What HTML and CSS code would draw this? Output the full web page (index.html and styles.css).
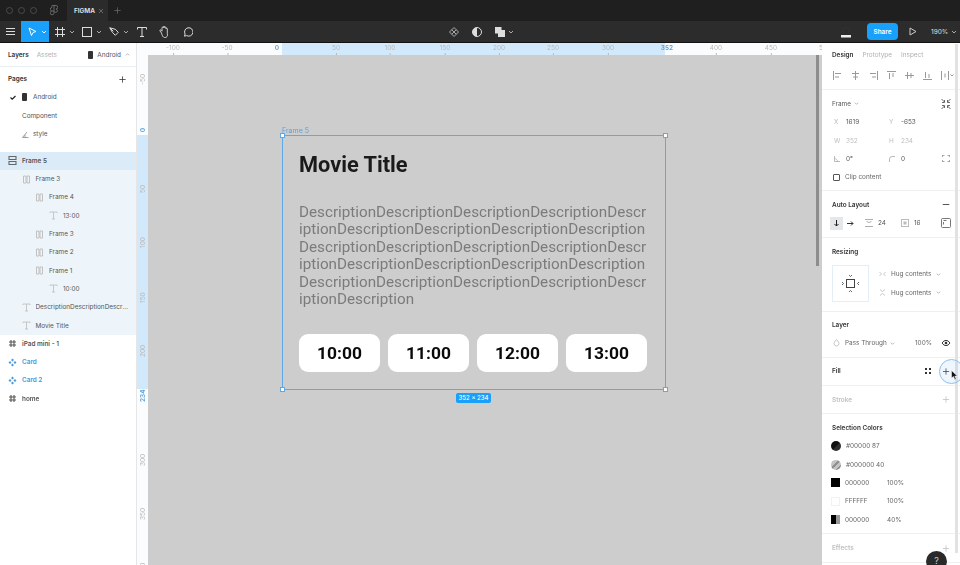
FILE: index.html
```html
<!DOCTYPE html>
<html lang="en">

<head>
  <meta charset="UTF-8">
  <title>Figma</title>
  <link rel="stylesheet" href="styles.css">
</head>

<body>

<svg class="sprite" width="0" height="0">
  <symbol id="chev" viewBox="0 0 6 6"><path d="M1 2l2 2 2-2" fill="none" stroke="currentColor"/></symbol>
  <symbol id="al" viewBox="0 0 9 9"><path d="M1.500 1h2.500v7H1.500zM5 1h2.500v7H5z" fill="none" stroke="currentColor" stroke-width=".9"/></symbol>
  <symbol id="alv" viewBox="0 0 9 9"><path d="M1 .5h7v3H1zM1 5.500h7v3H1z" fill="none" stroke="currentColor" stroke-width="1.100"/></symbol>
  <symbol id="txt" viewBox="0 0 9 9"><path d="M1 2V1h7v1M4.500 1v7M3 8h3" fill="none" stroke="currentColor" stroke-width=".8"/></symbol>
  <symbol id="hash" viewBox="0 0 9 9"><path d="M3 1v7M6 1v7M1 3h7M1 6h7" fill="none" stroke="currentColor" stroke-width="1.100"/></symbol>
  <symbol id="comp" viewBox="0 0 9 9"><path d="M4.500 .5l1.500 1.500-1.500 1.500L3 2zM4.500 5.500L6 7 4.500 8.500 3 7zM2 3l1.500 1.500L2 6 .5 4.500zM7 3l1.500 1.500L7 6 5.500 4.500z" fill="currentColor"/></symbol>
  <symbol id="plus" viewBox="0 0 9 9"><path d="M4.500 .5v8M.5 4.500h8" fill="none" stroke="currentColor"/></symbol>
</svg>

<div class="app">

  <div class="tabbar">
    <div class="lights"><i></i><i></i><i></i></div>
    <svg class="fig-logo" width="8" height="12" viewBox="0 0 8 12"><path d="M2 .5h4a1.700 1.700 0 0 1 0 3.500 1.700 1.700 0 1 1-2 2H2a1.700 1.700 0 0 1 0-3.500A1.700 1.700 0 0 1 2 .5zM4 .5v7.500a1.900 1.900 0 1 1-2-2" fill="none" stroke="#666"/></svg>
    <div class="file-tab">
      <span>FIGMA</span>
      <svg width="6" height="6" viewBox="0 0 6 6"><path d="M1 1l4 4M5 1L1 5" stroke="#666"/></svg>
    </div>
    <svg class="new-tab" width="7" height="7"><use href="#plus"/></svg>
  </div>

  <div class="toolbar">
    <div class="tools">
      <div class="tool t-menu"><svg width="10" height="8" viewBox="0 0 10 8"><path d="M0 .5h9M0 3.500h9M0 6.500h9" stroke="#ddd"/></svg></div>
      <div class="tool t-move">
        <svg width="9" height="10" viewBox="0 0 9 10"><path d="M1 1l7 3.500-3 1-1.500 3z" fill="none" stroke="#fff"/></svg>
        <svg class="chev" width="6" height="6"><use href="#chev"/></svg>
      </div>
      <div class="tool t-wide">
        <svg width="10" height="10" viewBox="0 0 10 10"><path d="M2.500 0v10M7.500 0v10M0 2.500h10M0 7.500h10" stroke="#ddd"/></svg>
        <svg class="chev" width="6" height="6"><use href="#chev"/></svg>
      </div>
      <div class="tool t-wide">
        <svg width="10" height="10" viewBox="0 0 10 10"><rect x=".5" y=".5" width="9" height="9" fill="none" stroke="#ddd"/></svg>
        <svg class="chev" width="6" height="6"><use href="#chev"/></svg>
      </div>
      <div class="tool t-wide">
        <svg width="10" height="10" viewBox="0 0 10 10"><path d="M.8.800l5.500 1.500 3 3-3 3-3-3zM.8.800l3.500 3.500" fill="none" stroke="#ddd"/></svg>
        <svg class="chev" width="6" height="6"><use href="#chev"/></svg>
      </div>
      <div class="tool t-single"><svg width="10" height="10" viewBox="0 0 10 10"><path d="M.5 2.500V.5h9v2M5 .5v9M3 9.500h4" fill="none" stroke="#ddd"/></svg></div>
      <div class="tool t-single"><svg width="11" height="12" viewBox="0 0 11 12"><path d="M2.500 7L1 5c-.6-1 .6-1.500 1.200-.7L3 5.200V1.800c0-1 1.300-1 1.300 0V1c0-1 1.400-1 1.400 0v.8c0-1 1.300-1 1.300 0v1c0-1 1.300-1 1.300 0v4.700C9 10 7.800 11.500 6 11.500S3.500 10.500 2.500 7z" fill="none" stroke="#ddd" stroke-width=".9"/></svg></div>
      <div class="tool t-single"><svg width="10" height="10" viewBox="0 0 10 10"><path d="M1.500 9.200l.6-2.200A4.200 4.200 0 1 1 3.700 8.600z" fill="none" stroke="#ddd"/></svg></div>
    </div>

    <div class="tools-center">
      <svg width="10" height="10" viewBox="0 0 10 10"><path d="M5 .5L9.500 5 5 9.500.5 5zM2.700 2.700l4.600 4.600M7.300 2.700L2.700 7.300" fill="none" stroke="#aaa"/></svg>
      <svg width="10" height="10" viewBox="0 0 10 10"><circle cx="5" cy="5" r="4.500" fill="none" stroke="#ddd"/><path d="M5 .5a4.500 4.500 0 0 0 0 9z" fill="#ddd"/></svg>
      <div class="bool">
        <svg width="10" height="10" viewBox="0 0 10 10"><path d="M0 0h6.500v3H10v7H3V6.500H0z" fill="#ddd"/></svg>
        <svg class="chev" width="6" height="6"><use href="#chev"/></svg>
      </div>
    </div>

    <div class="tools-right">
      <svg class="user" width="12" height="12" viewBox="0 0 12 12"><path d="M1 9h10v2.500H1z" fill="#eee"/><path d="M3 7V3l3-2 3 2v4" fill="none" stroke="#333"/></svg>
      <div class="share">Share</div>
      <svg class="play" width="8" height="9" viewBox="0 0 8 9"><path d="M1 1l6 3.500L1 8z" fill="none" stroke="#ccc"/></svg>
      <span class="zoom">190%</span>
      <svg class="chev" width="6" height="6"><use href="#chev"/></svg>
    </div>
  </div>

  <div class="workspace">

    <div class="left-panel">
      <div class="panel-tabs">
        <b>Layers</b>
        <span class="muted">Assets</span>
        <span class="page-pick">
          <svg width="5" height="8" viewBox="0 0 5 8"><rect width="5" height="8" rx="1" fill="#333"/></svg>
          Android
          <svg class="chev-up" width="5" height="5"><use href="#chev"/></svg>
        </span>
      </div>

      <div class="pages">
        <div class="pages-head">
          <b>Pages</b>
          <svg width="7" height="7"><use href="#plus"/></svg>
        </div>
        <div class="page-row">
          <svg class="check" width="6" height="5" viewBox="0 0 6 5"><path d="M.5 2.500l1.700 1.700L5.500 1" fill="none" stroke="#222" stroke-width="1.200"/></svg>
          <svg width="5" height="8" viewBox="0 0 5 8"><rect width="5" height="8" rx="1" fill="#333"/></svg>
          <span>Android</span>
        </div>
        <div class="page-row page-plain"><span>Component</span></div>
        <div class="page-row page-plain">
          <svg width="7" height="7" viewBox="0 0 7 7"><path d="M.5 6.500h6M.5 6.500L5 1M3 6.500V4" fill="none" stroke="#888" stroke-width=".8"/></svg>
          <span>style</span>
        </div>
      </div>

      <div class="layers">
        <div class="layer d0 sel"><svg width="9" height="9"><use href="#alv"/></svg><b>Frame 5</b></div>
        <div class="layer d1 child"><svg width="9" height="9"><use href="#al"/></svg><span>Frame 3</span></div>
        <div class="layer d2 child"><svg width="9" height="9"><use href="#al"/></svg><span>Frame 4</span></div>
        <div class="layer d3 child"><svg width="9" height="9"><use href="#txt"/></svg><span>13:00</span></div>
        <div class="layer d2 child"><svg width="9" height="9"><use href="#al"/></svg><span>Frame 3</span></div>
        <div class="layer d2 child"><svg width="9" height="9"><use href="#al"/></svg><span>Frame 2</span></div>
        <div class="layer d2 child"><svg width="9" height="9"><use href="#al"/></svg><span>Frame 1</span></div>
        <div class="layer d3 child"><svg width="9" height="9"><use href="#txt"/></svg><span>10:00</span></div>
        <div class="layer d1 child"><svg width="9" height="9"><use href="#txt"/></svg><span class="clip">DescriptionDescriptionDescription</span></div>
        <div class="layer d1 child"><svg width="9" height="9"><use href="#txt"/></svg><span>Movie Title</span></div>
        <div class="layer d0"><svg class="ic-dark" width="9" height="9"><use href="#hash"/></svg><b>iPad mini - 1</b></div>
        <div class="layer d0 purple"><svg width="9" height="9"><use href="#comp"/></svg><b>Card</b></div>
        <div class="layer d0 purple"><svg width="9" height="9"><use href="#comp"/></svg><b>Card 2</b></div>
        <div class="layer d0"><svg class="ic-dark" width="9" height="9"><use href="#hash"/></svg><b>home</b></div>
      </div>
    </div>

    <div class="stage">
      <div class="corner"></div>

      <div class="ruler-h">
        <div class="range"></div>
        <span class="rt" style="left:25px">-100</span>
        <span class="rt" style="left:79px">-50</span>
        <span class="rt rt-on" style="left:129px">0</span>
        <span class="rt" style="left:188px">50</span>
        <span class="rt" style="left:242px">100</span>
        <span class="rt" style="left:297px">150</span>
        <span class="rt" style="left:351px">200</span>
        <span class="rt" style="left:405px">250</span>
        <span class="rt" style="left:460px">300</span>
        <span class="rt rt-on" style="left:519px">352</span>
        <span class="rt" style="left:568px">400</span>
        <span class="rt" style="left:623px">450</span>
        <span class="rt" style="left:677px">500</span>
      </div>

      <div class="ruler-v">
        <div class="range"></div>
        <span class="rv" style="top:25px">-50</span>
        <span class="rv rt-on" style="top:75px">0</span>
        <span class="rv" style="top:134px">50</span>
        <span class="rv" style="top:188px">100</span>
        <span class="rv" style="top:243px">150</span>
        <span class="rv" style="top:297px">200</span>
        <span class="rv rt-on" style="top:342px">234</span>
        <span class="rv" style="top:406px">300</span>
        <span class="rv" style="top:460px">350</span>
        <span class="rv" style="top:515px">400</span>
      </div>

      <div class="canvas">
        <div class="frame">
          <span class="frame-name">Frame 5</span>
          <h1 class="movie-title">Movie Title</h1>
          <p class="desc">DescriptionDescriptionDescriptionDescriptionDescriptionDescriptionDescriptionDescriptionDescriptionDescriptionDescriptionDescriptionDescriptionDescriptionDescriptionDescriptionDescriptionDescriptionDescriptionDescriptionDescriptionDescriptionDescriptionDescription</p>
          <div class="times">
            <div class="time">10:00</div>
            <div class="time">11:00</div>
            <div class="time">12:00</div>
            <div class="time">13:00</div>
          </div>
          <i class="handle h-tl"></i><i class="handle h-tr"></i><i class="handle h-bl"></i><i class="handle h-br"></i>
          <span class="dims">352 × 234</span>
        </div>
        <div class="canvas-scroll"></div>
      </div>
    </div>

    <div class="right-panel">
      <div class="panel-scroll"></div>

      <div class="section top-section">
        <div class="design-tabs">
          <b>Design</b>
          <span class="muted">Prototype</span>
          <span class="muted">Inspect</span>
        </div>
        <div class="align-row">
          <svg width="9" height="9" viewBox="0 0 9 9"><path d="M.5 0v9M2 2.500h6M2 6h4" stroke="#999"/></svg>
          <svg width="9" height="9" viewBox="0 0 9 9"><path d="M4.500 0v9M1 2.500h7M2 6h5" stroke="#999"/></svg>
          <svg width="9" height="9" viewBox="0 0 9 9"><path d="M8.500 0v9M1 2.500h6M3 6h4" stroke="#999"/></svg>
          <svg width="9" height="9" viewBox="0 0 9 9"><path d="M0 .5h9M2.500 2v6M6 2v4" stroke="#999"/></svg>
          <svg width="9" height="9" viewBox="0 0 9 9"><path d="M0 4.500h9M2.500 1v7M6 2v5" stroke="#999"/></svg>
          <svg width="9" height="9" viewBox="0 0 9 9"><path d="M0 8.500h9M2.500 1v6M6 3v4" stroke="#999"/></svg>
          <svg width="13" height="9" viewBox="0 0 13 9"><path d="M.5 0v9M7.500 0v9M4 2.500v4M9.500 3.500l1.500 1.500 1.500-1.500" fill="none" stroke="#999"/></svg>
        </div>
      </div>

      <div class="section frame-sec">
        <div class="row">
          <span class="sec-plain">Frame</span>
          <svg class="chev-g" width="5" height="5"><use href="#chev"/></svg>
          <svg class="row-end" width="10" height="10" viewBox="0 0 10 10"><path d="M.5 0l3 3M9.500 0l-3 3M.5 10l3-3M9.500 10l-3-3M3.500 1v2.500H1M6.500 1v2.500H9M3.500 9V6.500H1M6.500 9V6.500H9" fill="none" stroke="#444" stroke-width=".8"/></svg>
        </div>
        <div class="row"><div class="field"><em>X</em><span>1619</span></div><div class="field"><em>Y</em><span>-653</span></div></div>
        <div class="row"><div class="field off"><em>W</em><span>352</span></div><div class="field off"><em>H</em><span>234</span></div></div>
        <div class="row">
          <div class="field"><svg class="f-ic" width="6" height="6" viewBox="0 0 6 6"><path d="M.5 0v5.500H6M.5 2.500c1.500 0 3 1.500 3 3" fill="none" stroke="#aaa" stroke-width=".8"/></svg><span>0°</span></div>
          <div class="field"><svg class="f-ic" width="6" height="6" viewBox="0 0 6 6"><path d="M.5 6V3A2.500 2.500 0 0 1 3 .5h3" fill="none" stroke="#aaa" stroke-width=".8"/></svg><span>0</span></div>
          <svg class="row-end" width="7" height="7" viewBox="0 0 7 7"><path d="M0 2V0h2M5 0h2v2M7 5v2H5M2 7H0V5" fill="none" stroke="#555"/></svg>
        </div>
        <div class="row clip-row"><i class="checkbox"></i><span>Clip content</span></div>
      </div>

      <div class="section">
        <div class="row">
          <b>Auto Layout</b>
          <svg class="row-end" width="7" height="2"><path d="M0 .5h7" stroke="#555"/></svg>
        </div>
        <div class="row al-row">
          <span class="dir-on"><svg width="7" height="7" viewBox="0 0 7 7"><path d="M3.500 0v6M1.500 4l2 2 2-2" fill="none" stroke="#222"/></svg></span>
          <svg class="dir" width="7" height="7" viewBox="0 0 7 7"><path d="M0 3.500h6M4 1.500l2 2-2 2" fill="none" stroke="#333"/></svg>
          <svg class="al-gap" width="8" height="8" viewBox="0 0 8 8"><path d="M0 .5h8M0 7.500h8M1.500 2.500l2.500 1 2.500-1" fill="none" stroke="#999" stroke-width=".8"/></svg>
          <span class="al-num">24</span>
          <svg class="al-pad" width="8" height="8" viewBox="0 0 8 8"><rect x=".5" y=".5" width="7" height="7" fill="none" stroke="#bbb"/><rect x="2.500" y="2.500" width="3" height="3" fill="#bbb"/></svg>
          <span class="al-num">16</span>
          <svg class="row-end" width="10" height="10" viewBox="0 0 10 10"><rect x=".5" y=".5" width="9" height="9" rx="1" fill="none" stroke="#777"/><path d="M2.500 2.500h3M2.500 4v2.500" stroke="#777"/></svg>
        </div>
      </div>

      <div class="section resize-sec">
        <div class="row"><b>Resizing</b></div>
        <div class="resize">
          <div class="resize-box">
            <svg width="19" height="19" viewBox="0 0 19 19"><rect x="5.500" y="5.500" width="8" height="8" fill="none" stroke="#444"/><path d="M8 1l1.500 1.500L11 1M8 18l1.500-1.500L11 18M1 8l1.500 1.500L1 11M18 8l-1.500 1.500L18 11" fill="none" stroke="#444" stroke-width=".8"/></svg>
          </div>
          <div class="hug">
            <div class="hug-row">
              <svg width="7" height="6" viewBox="0 0 7 6"><path d="M.5 1l2 2-2 2M6.500 1l-2 2 2 2" fill="none" stroke="#bbb" stroke-width=".8"/></svg>
              <span>Hug contents</span>
              <svg class="chev-g" width="5" height="5"><use href="#chev"/></svg>
            </div>
            <div class="hug-row">
              <svg width="7" height="7" viewBox="0 0 7 7"><path d="M1 .5l2.500 2 2.500-2M1 6.500l2.500-2 2.500 2" fill="none" stroke="#bbb" stroke-width=".8"/></svg>
              <span>Hug contents</span>
              <svg class="chev-g" width="5" height="5"><use href="#chev"/></svg>
            </div>
          </div>
        </div>
      </div>

      <div class="section tight">
        <div class="row"><b>Layer</b></div>
        <div class="row blend-row">
          <svg width="7" height="8" viewBox="0 0 7 8"><path d="M3.500.5l2 2.500a2.500 2.500 0 1 1-4 0z" fill="none" stroke="#bbb" stroke-width=".8"/></svg>
          <span>Pass Through</span>
          <svg class="chev-g" width="5" height="5"><use href="#chev"/></svg>
          <span class="blend-pct">100%</span>
          <svg class="row-end" width="9" height="6" viewBox="0 0 9 6"><path d="M.5 3C2 1 3 .5 4.500.5S7 1 8.500 3C7 5 6 5.500 4.500 5.500S2 5 .5 3z" fill="none" stroke="#333"/><circle cx="4.500" cy="3" r="1.300" fill="#333"/></svg>
        </div>
      </div>

      <div class="section tight">
        <div class="row">
          <b>Fill</b>
          <svg class="fill-grid" width="6" height="6" viewBox="0 0 6 6"><path d="M0 0h2v2H0zM4 0h2v2H4zM0 4h2v2H0zM4 4h2v2H4z" fill="#333"/></svg>
          <svg class="row-end" width="7" height="7"><use href="#plus"/></svg>
        </div>
      </div>

      <div class="section tight">
        <div class="row off-row">
          <b>Stroke</b>
          <svg class="row-end" width="7" height="7"><use href="#plus"/></svg>
        </div>
      </div>

      <div class="section">
        <div class="row"><b>Selection Colors</b></div>
        <div class="row color-row"><i class="sw sw-dark"></i><span>#00000 87</span></div>
        <div class="row color-row"><i class="sw sw-grey"></i><span>#000000 40</span></div>
        <div class="row color-row"><i class="sq sq-black"></i><span class="hex">000000</span><span>100%</span></div>
        <div class="row color-row"><i class="sq sq-white"></i><span class="hex">FFFFFF</span><span>100%</span></div>
        <div class="row color-row"><i class="sq sq-half"></i><span class="hex">000000</span><span>40%</span></div>
      </div>

      <div class="section">
        <div class="row off-row">
          <b>Effects</b>
          <svg class="row-end" width="7" height="7"><use href="#plus"/></svg>
        </div>
      </div>

      <div class="help">?</div>

      <div class="click-ring"></div>
      <svg class="cursor" width="7" height="10" viewBox="0 0 7 10"><path d="M.5.500v7.500l2-1.500 1.300 3 1.300-.6-1.300-2.800h2.500z" fill="#111" stroke="#fff" stroke-width=".5"/></svg>
    </div>

  </div>
</div>

</body>
</html>
```

FILE: styles.css
```css
* {
  margin: 0;
  padding: 0;
  box-sizing: border-box;
}

:root {
  --blue: #18a0fb;
  --sel-line: #5ea9e8;
  --canvas: #cdcdcd;
  --text: #333;
  --muted: #b0b0b0;
  --line: #eef0f2;
  --row-h: 18.3px;
}

body {
  width: 960px;
  height: 565px;
  overflow: hidden;
  background: #fff;
  font-family: 'Inter', sans-serif;
  font-size: 6.4px;
  color: var(--text);
}

.sprite {
  position: absolute;
}

svg {
  display: block;
  flex-shrink: 0;
}

b {
  font-weight: 600;
}

em {
  font-style: normal;
}

.app {
  height: 565px;
  display: flex;
  flex-direction: column;
  filter: blur(0.45px);
}

.muted {
  color: var(--muted);
}

/* title bar */
.tabbar {
  height: 21px;
  background: #1f1f1f;
  display: flex;
  align-items: center;
  color: #666;
}

.lights {
  display: flex;
  gap: 5px;
  margin-left: 6px;
  width: 40px;
}

.lights i {
  width: 7px;
  height: 7px;
  border: 1px solid #4b4b4b;
  border-radius: 50%;
}

.fig-logo {
  margin-left: 4px;
}

.file-tab {
  height: 21px;
  width: 41px;
  margin-left: 9px;
  padding: 0 4px 0 7px;
  background: #2b2b2b;
  display: flex;
  align-items: center;
  justify-content: space-between;
  font-weight: 700;
  color: #ddd;
}

.new-tab {
  margin-left: 6px;
}

/* toolbar */
.toolbar {
  height: 22px;
  background: #2c2c2c;
  border-bottom: 1px solid #111;
  display: flex;
  align-items: center;
  color: #ccc;
}

.tools {
  display: flex;
  height: 21px;
  width: 452px;
}

.tool {
  display: flex;
  align-items: center;
  justify-content: center;
  gap: 4px;
  height: 21px;
}

.chev {
  color: #aaa;
}

.t-menu {
  width: 21px;
}

.t-move {
  width: 28px;
  padding-left: 5px;
  background: var(--blue);
  color: #fff;
}

.t-move .chev {
  color: #fff;
}

.t-wide {
  width: 27px;
  padding-left: 5px;
}

.t-single {
  width: 23px;
}

.tools-center {
  display: flex;
  align-items: center;
  gap: 13px;
  margin-left: -4px;
  width: 392px;
  padding-left: 1px;
}

.bool {
  display: flex;
  align-items: center;
  gap: 3px;
}

.tools-right {
  display: flex;
  align-items: center;
  flex: 1;
}

.share {
  width: 31px;
  height: 17px;
  margin-left: 15px;
  background: var(--blue);
  border-radius: 4px;
  color: #fff;
  font-weight: 600;
  display: flex;
  align-items: center;
  justify-content: center;
}

.play {
  margin-left: 11px;
}

.zoom {
  margin-left: 14px;
  margin-right: 3px;
  font-weight: 500;
}

/* main area */
.workspace {
  flex: 1;
  display: flex;
  min-height: 0;
}

.left-panel {
  width: 136px;
  flex-shrink: 0;
  background: #fff;
}

.panel-tabs {
  height: 24px;
  padding: 0 6px 0 8px;
  border-bottom: 1px solid #e8f0f6;
  display: flex;
  align-items: center;
  gap: 8px;
}

.page-pick {
  margin-left: auto;
  display: flex;
  align-items: center;
  gap: 4px;
  color: #555;
}

.chev-up {
  transform: rotate(180deg);
  color: #aaa;
}

.pages {
  padding: 3px 0 8.500px;
}

.pages-head {
  height: var(--row-h);
  padding: 0 10px 0 8px;
  display: flex;
  align-items: center;
  justify-content: space-between;
}

.page-row {
  height: var(--row-h);
  padding-left: 10px;
  display: flex;
  align-items: center;
  gap: 6px;
}

.page-row span {
  color: #555;
}

.page-plain {
  padding-left: 22px;
}

.page-plain svg {
  margin-right: -2px;
}

.layer {
  height: var(--row-h);
  display: flex;
  align-items: center;
  gap: 5px;
  color: #555;
}

.layer svg {
  color: #bbb;
}

.layer .ic-dark {
  color: #555;
}

.d0 {
  padding-left: 8px;
}

.d1 {
  padding-left: 21.5px;
}

.d2 {
  padding-left: 35px;
}

.d3 {
  padding-left: 49px;
}

.sel {
  background: #dcebf8;
}

.sel svg {
  color: #666;
}

.child {
  background: #eef5fa;
}

.purple,
.purple svg {
  color: #4d98d8;
}

.clip {
  width: 94px;
  overflow: hidden;
  white-space: nowrap;
  text-overflow: ellipsis;
}

/* rulers + canvas */
.stage {
  flex: 1;
  display: grid;
  grid-template-columns: 11px 1fr;
  grid-template-rows: 12px 1fr;
  min-width: 0;
  border-left: 1px solid #e6e6e6;
}

.corner {
  background: #fafcfe;
}

.ruler-h,
.ruler-v {
  position: relative;
  overflow: hidden;
  background: #fafcfe;
  color: #b9b9b9;
  font-size: 6.5px;
}

.ruler-h .range {
  position: absolute;
  left: 134px;
  top: 0;
  width: 383px;
  height: 12px;
  background: #d2e8fb;
}

.ruler-v .range {
  position: absolute;
  top: 80px;
  left: 0;
  width: 11px;
  height: 254px;
  background: #d2e8fb;
}

.rt {
  position: absolute;
  top: 1px;
  transform: translateX(-50%);
  line-height: 9px;
}

.rt:not(.rt-on)::after {
  content: '';
  position: absolute;
  left: 50%;
  top: 9px;
  width: 1px;
  height: 2px;
  background: #bbb;
}

.rv {
  position: absolute;
  left: 1px;
  width: 10px;
  height: 9px;
  line-height: 9px;
  text-align: center;
  white-space: nowrap;
  transform: translateY(-50%) rotate(-90deg);
}

.rt-on {
  color: #5aa2dc;
  font-weight: 600;
}

.canvas {
  position: relative;
  background: var(--canvas);
  overflow: hidden;
}

.canvas-scroll {
  position: absolute;
  right: 3px;
  top: 0;
  width: 3px;
  height: 211px;
  background: #8d8d8d;
}

.frame {
  position: absolute;
  left: 134px;
  top: 80px;
  width: 384px;
  height: 255px;
  border: 1px solid var(--sel-line);
  padding: 16px 16px 0;
  display: flex;
  flex-direction: column;
  gap: 26px;
}

.frame-name {
  position: absolute;
  left: -1px;
  top: -10px;
  color: #5aa2dc;
  font-size: 7px;
}

.movie-title {
  height: 26px;
  font-family: 'Roboto', sans-serif;
  font-size: 21.740px;
  line-height: 26px;
  font-weight: 700;
  color: #1a1a1a;
}

.desc {
  width: 348px;
  height: 104px;
  font-family: 'Roboto', sans-serif;
  font-size: 15.220px;
  line-height: 17.450px;
  color: #7b7b7b;
  word-break: break-all;
}

.times {
  display: flex;
  gap: 8px;
}

.time {
  width: 81px;
  height: 38px;
  background: #fff;
  border-radius: 9px;
  display: flex;
  align-items: center;
  justify-content: center;
  font-family: 'Roboto', sans-serif;
  font-size: 17.400px;
  font-weight: 700;
  color: #0a0a0a;
}

.handle {
  position: absolute;
  width: 5px;
  height: 5px;
  background: #fff;
  border: 1px solid var(--sel-line);
}

.h-tl {
  left: -3px;
  top: -3px;
}

.h-tr {
  right: -3px;
  top: -3px;
}

.h-bl {
  left: -3px;
  bottom: -3px;
}

.h-br {
  right: -3px;
  bottom: -3px;
}

.dims {
  position: absolute;
  left: 173px;
  bottom: -14px;
  width: 35px;
  height: 10px;
  background: var(--blue);
  border-radius: 2px;
  color: #fff;
  font-size: 6px;
  font-weight: 500;
  line-height: 10px;
  text-align: center;
}

/* design panel */
.right-panel {
  position: relative;
  width: 138px;
  flex-shrink: 0;
  background: #fff;
  overflow: hidden;
}

.panel-scroll {
  position: absolute;
  right: 2px;
  top: 1px;
  width: 3px;
  height: 509px;
  background: #e2e2e2;
}

.section {
  padding: 4.800px 10px;
  border-bottom: 1px solid var(--line);
}

.top-section {
  padding-top: 0;
}

.frame-sec {
  padding-top: 5px;
  padding-bottom: 3.600px;
}

.resize-sec {
  padding-bottom: 8.800px;
}

.tight {
  padding-top: 4.400px;
  padding-bottom: 4.400px;
}

.design-tabs {
  height: 23px;
  display: flex;
  align-items: center;
  gap: 9px;
}

.align-row {
  height: 18px;
  display: flex;
  align-items: center;
  gap: 9px;
  padding-left: 1px;
}

.row {
  height: var(--row-h);
  display: flex;
  align-items: center;
  position: relative;
}

.row-end {
  position: absolute;
  left: 114px;
  transform: translateX(-50%);
}

.sec-plain {
  color: #555;
}

.chev-g {
  color: #aaa;
  margin-left: 3px;
}

.field {
  width: 55px;
  display: flex;
  align-items: center;
  color: #555;
}

.field em {
  width: 14px;
  padding-left: 2px;
  color: #bbb;
}

.f-ic {
  margin: 0 6px 0 2px;
}

.off span,
.off em {
  color: #c0c0c0;
}

.clip-row {
  gap: 5px;
  color: #666;
}

.checkbox {
  width: 7px;
  height: 7px;
  margin-left: 1px;
  border: 1px solid #555;
  border-radius: 1px;
}

.dir-on {
  width: 13px;
  height: 13px;
  margin-left: -2px;
  background: #e5e8ea;
  display: flex;
  align-items: center;
  justify-content: center;
}

.dir {
  margin-left: 4px;
}

.al-gap {
  margin-left: 11px;
}

.al-num {
  margin-left: 5px;
  color: #555;
}

.al-pad {
  margin-left: 15px;
}

.resize {
  margin-top: 4px;
  height: 36.600px;
  display: flex;
}

.resize-box {
  width: 37px;
  height: 37px;
  border: 1px solid #e3eef6;
  display: flex;
  align-items: center;
  justify-content: center;
}

.hug {
  margin-left: 10px;
}

.hug-row {
  height: var(--row-h);
  display: flex;
  align-items: center;
  gap: 5px;
  color: #666;
}

.hug-row .chev-g {
  margin-left: 0;
}

.blend-row {
  color: #666;
}

.blend-row > svg:first-child {
  margin-left: 1px;
  margin-right: 5px;
}

.blend-pct {
  position: absolute;
  left: 83px;
}

.fill-grid {
  position: absolute;
  left: 93px;
}

.off-row,
.off-row b {
  color: #c0c0c0;
}

.color-row {
  gap: 4px;
  color: #666;
}

.sw {
  width: 10px;
  height: 10px;
  margin-left: -1px;
  margin-right: 1px;
  border-radius: 50%;
}

.sw-dark {
  background: linear-gradient(135deg, #111 50%, #2e2e2e 50%);
}

.sw-grey {
  background: repeating-linear-gradient(135deg, #8f8f8f 0, #8f8f8f 2.500px, #c4c4c4 2.500px, #c4c4c4 5px);
}

.sq {
  width: 9px;
  height: 9px;
  margin-right: 1px;
  margin-left: -1px;
}

.sq-black {
  background: #000;
}

.sq-white {
  background: #fff;
  border: 1px solid #f2f2f2;
}

.sq-half {
  background: linear-gradient(90deg, #000 50%, #999 50%);
}

.hex {
  width: 38px;
}

.help {
  position: absolute;
  left: 104px;
  top: 508px;
  width: 21px;
  height: 21px;
  background: #2a2a2a;
  border-radius: 50%;
  color: #ccc;
  font-size: 9px;
  line-height: 20px;
  text-align: center;
}

.click-ring {
  position: absolute;
  left: 117px;
  top: 316px;
  width: 25px;
  height: 25px;
  border: 1.500px solid #8fc0ea;
  border-radius: 50%;
  background: rgba(130, 185, 235, 0.12);
}

.cursor {
  position: absolute;
  left: 129px;
  top: 327px;
}
```
